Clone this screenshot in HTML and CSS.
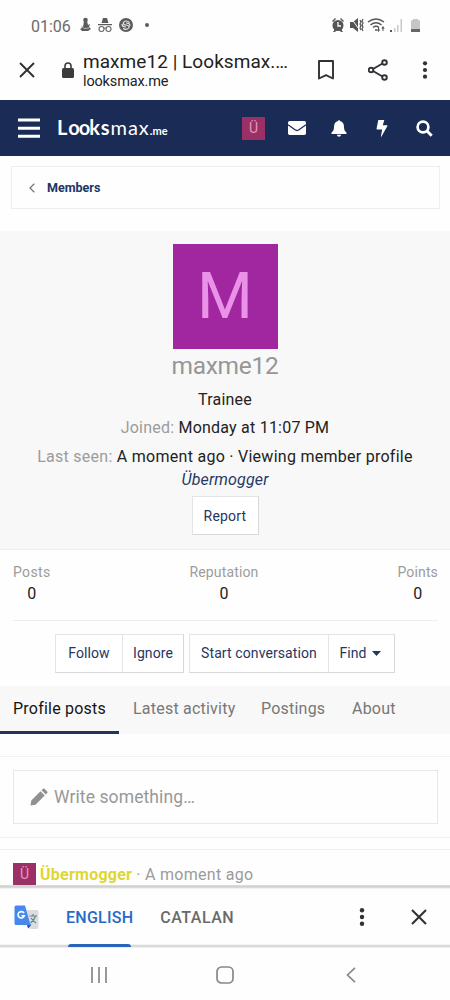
FILE: index.html
```html
<!DOCTYPE html>
<html lang="en">
<head>
<meta charset="utf-8">
<title>maxme12 | Looksmax.me</title>
<link rel="stylesheet" href="styles.css">
</head>
<body>
<div class="status">
  <span class="clock">01:06</span>
  <svg class="status-left" width="76" height="16" viewBox="0 0 76 16">
    <g fill="#5c5c5c"><circle cx="6.500" cy="3" r="2.300"/><path d="M5 4h3l1 4 2-1-1 3 2 2-3 2H3l-2-2 2-1-1-2 2 1z"/><path d="M24 1h4l1.500 5h-7zM19 7h14v1.200H19z"/><circle cx="47" cy="8" r="7"/><circle cx="68" cy="8" r="2"/></g>
    <path d="M2 9q3 4 8 2" stroke="#ddd" fill="none" stroke-width=".7"/>
    <g fill="none" stroke="#666" stroke-width="1.100"><circle cx="22.500" cy="12" r="2.500"/><circle cx="29.500" cy="12" r="2.500"/><path d="M25 11.500q1-1 2 0"/></g>
    <path d="M50.500 5.500q-4-3-6 0-1 2 2.500 2.500t3 2.500q-2 3-6 1M43 7q0 3 4 3M51 9q0-3-4-3" fill="none" stroke="#eee" stroke-width="1.200"/>
  </svg>
  <svg class="status-right" width="92" height="16" viewBox="0 0 92 16">
    <g fill="#555"><circle cx="7" cy="8.500" r="5.500"/><path d="M1 4l3-3 1 1-3 3zM13 4l-3-3-1 1 3 3zM2 15l2-3 2 1-2 2zM12 15l-2-3-2 1 2 2z"/><path d="M19 5h3l5-4v14l-5-4h-3z"/></g>
    <path d="M7 5v4h3" fill="none" stroke="#fff" stroke-width="1.300"/>
    <path d="M20 1l10 14" stroke="#fff" stroke-width="1"/><path d="M29 3l1 2-1 2 1 2-1 2 1 2M32 2l-1 2 1 2-1 2 1 2-1 2 1 2" fill="none" stroke="#555" stroke-width="1.200"/>
    <g fill="none" stroke="#555" stroke-width="1.400"><path d="M37 5q8-6 16 0M39.500 8q5.500-4.500 11 0M42 10.500q3-2.500 6 0"/><path d="M47.500 10v4M52 14v-4" stroke-width="1"/></g>
    <g fill="#555"><circle cx="45" cy="13" r="1"/><path d="M45.800 12.500h3.400l-1.700 2.500zM50.300 11.500h3.400L52 9zM59 13h2v2h-2z"/></g>
    <path d="M63 11h1.500v4H63zM66 8h1.500v7H66zM69.500 2H71v13h-1.500z" fill="#c8c8c8"/>
    <path d="M80 4q0-1 2-1V2h5v1q2 0 2 1v9h-9z" fill="#c6c6c6"/><path d="M80 12h9v3h-9z" fill="#666"/>
  </svg>
</div>
<div class="browser">
  <svg class="close" width="16" height="16" viewBox="0 0 16 16"><path d="M1 1l14 14M15 1L1 15" stroke="#303134" stroke-width="1.900"/></svg>
  <svg class="lock" width="12" height="16" viewBox="0 0 12 16"><path d="M3 7V4a3 3 0 0 1 6 0v3" fill="none" stroke="#3c3c3f" stroke-width="1.600"/><rect y="6" width="12" height="10" rx="1.500" fill="#3c3c3f"/></svg>
  <div class="address"><div class="page-title">maxme12 | Looksmax.…</div><div class="host">looksmax.me</div></div>
  <svg class="bookmark" width="16" height="20" viewBox="0 0 16 20"><path d="M1 1h14v17.500l-7-3.300-7 3.300z" fill="none" stroke="#303134" stroke-width="1.900" stroke-linejoin="round"/></svg>
  <svg class="share" width="20" height="22" viewBox="0 0 20 22"><g fill="none" stroke="#303134" stroke-width="1.900"><circle cx="16.500" cy="3.500" r="2.300"/><circle cx="3" cy="11" r="2.300"/><circle cx="16.500" cy="18.500" r="2.300"/><path d="M5 10l9.500-5.500M5 12l9.500 5.500"/></g></svg>
  <svg class="more" width="6" height="18" viewBox="0 0 6 18"><g fill="#303134"><circle cx="3" cy="2.300" r="2.100"/><circle cx="3" cy="9" r="2.100"/><circle cx="3" cy="15.700" r="2.100"/></g></svg>
</div>
<header class="site">
  <svg class="menu" width="22" height="20" viewBox="0 0 22 20"><path d="M0 2h22M0 10.200h22M0 18.300h22" stroke="#fff" stroke-width="3"/></svg>
  <div class="logo"><b>L<span class="oo">oo</span>ks</b><span class="thin">max</span><small>.me</small></div>
  <span class="mini head-mini">Ü</span>
  <svg class="mail" width="18" height="14" viewBox="0 0 18 14"><rect width="18" height="14" rx="1.700" fill="#fff"/><path d="M0 3.800l7 5q2 1.400 4 0l7-5" fill="none" stroke="#1a2b55" stroke-width="1.300"/></svg>
  <svg class="bell" width="16" height="17" viewBox="0 0 16 17"><path d="M7 1q1-2 2 0 4 1 4 6 0 4 2.500 5.500V14H.5v-1.500Q3 11 3 7q0-5 4-6zM5.800 14.700h4.400q-.4 2-2.200 2t-2.200-2z" fill="#fff"/></svg>
  <svg class="bolt" width="12" height="17" viewBox="0 0 12 17"><path d="M2.300 0h6L6.800 5.300H11q.8 0 .4.800L5.500 16.500q-.7.800-.6-.3L6.200 9.500H1.200q-.8 0-.7-.8z" fill="#fff"/></svg>
  <svg class="search" width="17" height="17" viewBox="0 0 17 17"><g fill="none" stroke="#fff" stroke-width="2.700"><circle cx="7" cy="7" r="5.400"/><path d="M11 11l4.700 4.700" stroke-width="3"/></g></svg>
</header>
<nav class="crumb">
  <svg width="6" height="10" viewBox="0 0 6 10"><path d="M5.300.8L1 5l4.300 4.200" fill="none" stroke="#777" stroke-width="1.300"/></svg>
  <a>Members</a>
</nav>
<section class="profile">
  <div class="avatar">M</div>
  <h1>maxme12</h1>
  <div class="line role">Trainee</div>
  <div class="line joined"><i>Joined:</i> Monday at 11:07 PM</div>
  <div class="line seen"><i>Last seen:</i> A moment ago · Viewing member profile</div>
  <em>Übermogger</em>
  <a class="button report">Report</a>
</section>
<section class="stats">
  <dl><dt>Posts</dt><dd>0</dd></dl>
  <dl><dt>Reputation</dt><dd>0</dd></dl>
  <dl><dt>Points</dt><dd>0</dd></dl>
</section>
<div class="actions">
  <a class="button follow">Follow</a><a class="button ignore">Ignore</a>
  <a class="button start">Start conversation</a><a class="button find">Find <svg width="9" height="5" viewBox="0 0 9 5"><path d="M0 0h9L4.500 5z" fill="#26365f"/></svg></a>
</div>
<nav class="tabs"><a class="active">Profile posts</a><a class="t2">Latest activity</a><a class="t3">Postings</a><a class="t4">About</a></nav>
<section class="composer">
  <div class="field"><svg width="18" height="18" viewBox="0 0 18 18"><path d="M.5 17.500L1.300 12.500 10.500 3.300l4.200 4.200L5.500 16.700zM11.500 2.300l1.500-1.500q.8-.7 1.600 0l2.600 2.600q.7.800 0 1.600l-1.500 1.500z" fill="#919191"/></svg><span>Write something…</span></div>
</section>
<section class="post"><span class="mini">Ü</span><b>Übermogger</b><span class="when">· A moment ago</span></section>
<div class="translate">
  <svg class="gt" width="25" height="25" viewBox="0 0 25 25"><path d="M11 5h12q1.500 0 1.500 1.500V22q0 2-1.500 2h-7z" fill="#dadce0"/><path d="M13 19.500h4.500l-3 4q-1.500-1-1.500-4z" fill="#3056b0"/><path d="M2 .5h9l5.500 19.500H2Q.5 20 .5 18.500V2Q.5.500 2 .5z" fill="#4688ed"/><path d="M10 8.200a3.200 3.200 0 1 0 .3 2.500H7.500" fill="none" stroke="#fff" stroke-width="1.600"/><path d="M15.500 11h7.500M19 9v2M21.500 11q-1 4-5 7M17 13q2 3 5 5" fill="none" stroke="#68858c" stroke-width="1.200"/></svg>
  <span class="lang chosen">ENGLISH</span><span class="lang catalan">CATALAN</span>
  <svg class="tmore" width="6" height="18" viewBox="0 0 6 18"><g fill="#303134"><circle cx="3" cy="2.300" r="2.200"/><circle cx="3" cy="9" r="2.200"/><circle cx="3" cy="15.700" r="2.200"/></g></svg>
  <svg class="tclose" width="16" height="16" viewBox="0 0 16 16"><path d="M1 1l14 14M15 1L1 15" stroke="#303134" stroke-width="2.100"/></svg>
</div>
<div class="system">
  <svg class="recents" width="16" height="16" viewBox="0 0 16 16"><path d="M1 0v16M8 0v16M15 0v16" stroke="#888" stroke-width="1.700"/></svg>
  <svg class="home" width="18" height="18" viewBox="0 0 18 18"><rect x="1" y="1" width="16" height="16" rx="4.500" fill="none" stroke="#888" stroke-width="1.700"/></svg>
  <svg class="back" width="10" height="16" viewBox="0 0 10 16"><path d="M9 .8L1.500 8 9 15.200" fill="none" stroke="#888" stroke-width="1.700"/></svg>
</div>
</body>
</html>
```
FILE: styles.css
```css
* { box-sizing: border-box; }
body { margin: 0; width: 450px; height: 1000px; overflow: hidden; background: #fefefe; font-family: Roboto, sans-serif; color: #222; }
svg { display: block; flex: none; }
.status, .browser, .site, .crumb, .translate, .system, .post { display: flex; align-items: center; white-space: nowrap; }
.status { height: 48px; padding: 4px 27px 0 31px; }
.clock { width: 40px; font-size: 16px; color: #6a6a6a; }
.status-left { margin: 0 0 2px 8px; }
.status-right { margin: 0 0 2px auto; }
.browser { height: 52px; padding: 0 22px 9px 19px; }
.lock { margin: 0 9px 0 27px; }
.address { width: 215px; padding-top: 3px; }
.page-title { font-size: 19px; line-height: 21px; letter-spacing: .05px; }
.host { font-size: 14.5px; line-height: 19px; letter-spacing: -.15px; }
.bookmark { margin-left: 20px; }
.share { margin-left: 34px; }
.more { margin-left: auto; }
.site { height: 56px; background: #1a2b55; padding: 0 17px 0 18px; }
.logo { width: 124px; margin-left: 17px; padding-top: 1px; color: #fff; font: 20px/24px Lato, sans-serif; letter-spacing: .9px; }
.logo b { font-weight: 700; }
.oo { letter-spacing: -1px; }
.thin { font-weight: 400; }
.logo small { font-size: 11px; font-weight: 700; letter-spacing: .2px; }
.mini { width: 23px; height: 23px; flex: none; background: #9a3065; color: #e895bd; font-size: 14px; line-height: 23px; text-align: center; }
.head-mini { margin-left: 61px; }
.mail { margin-left: 23px; }
.bell { margin-left: 25px; }
.bolt { margin-left: 29px; }
.search { margin-left: auto; }
.crumb { height: 43px; margin: 10px 10px 22px 11px; padding-left: 17px; border: 1px solid #eee; }
.crumb a { margin-left: 12px; color: #203464; font-size: 12.5px; font-weight: 700; }
.profile { height: 319px; padding-top: 13px; background: #f8f8f8; border-bottom: 1px solid #eee; display: flex; flex-direction: column; align-items: center; white-space: nowrap; }
.avatar { width: 105px; height: 105px; flex: none; background: #a127a0; color: #e992e7; font-size: 64px; line-height: 106px; text-align: center; }
h1 { margin: 2px 0 0; color: #969696; font-size: 24.5px; font-weight: 400; line-height: 30px; letter-spacing: -.3px; }
.line { font-size: 16px; line-height: 24px; letter-spacing: .27px; }
.line i { color: #9c9c9c; font-style: normal; }
.role { margin-top: 7px; letter-spacing: .2px; }
.joined { margin-top: 4px; letter-spacing: .22px; }
.seen { margin-top: 5px; }
.profile em { margin-top: 0; color: #263966; font-size: 16px; line-height: 22px; letter-spacing: .15px; }
.button { height: 39px; border: 1px solid #e4e4e4; border-right-color: #d8d8d8; border-bottom-color: #d8d8d8; background: #fff; color: #26365f; font-size: 14px; display: flex; align-items: center; justify-content: center; letter-spacing: .1px; padding-bottom: 1px; }
.report { width: 67px; margin-top: 5px; letter-spacing: .2px; padding-bottom: 0; }
.stats { height: 70px; margin: 1px 12px 0 13px; padding-top: 11px; border-bottom: 1px solid #eee; display: flex; justify-content: space-between; text-align: center; }
dl, dd { margin: 0; }
dt { color: #9c9c9c; font-size: 14px; line-height: 21px; letter-spacing: .15px; }
dl:first-child dt { letter-spacing: .35px; }
dd { font-size: 16px; line-height: 22px; }
.actions { display: flex; padding: 13px 0 0 55px; height: 65px; }
.follow { width: 68px; }
.ignore { width: 62px; margin-left: -1px; }
.start { width: 140px; margin-left: 5px; }
.find { width: 67px; margin-left: -1px; gap: 5px; padding-right: 3px; }
.tabs { height: 48px; background: #f8f8f8; display: flex; font-size: 16px; line-height: 45px; letter-spacing: .22px; color: #777; }
.tabs .active { width: 119px; padding-left: 13px; border-bottom: 3px solid #24345f; color: #141414; }
.t2 { width: 128px; margin-left: 14px; }
.t3 { width: 91px; }
.composer { height: 82px; margin-top: 22px; padding: 13px 12px 13px 13px; border: solid #f1f1f1; border-width: 1px 0; }
.field { height: 54px; border: 1px solid #e8e8e8; display: flex; align-items: center; padding-left: 16px; color: #989898; font-size: 17.5px; letter-spacing: .1px; }
.field span { margin-left: 6px; }
.post { height: 38px; margin-top: 11px; padding: 13px 0 0 13px; border-top: 1px solid #f1f1f1; align-items: flex-start; font-size: 16px; line-height: 23px; }
.post b { margin-left: 4px; color: #ded732; letter-spacing: .25px; }
.when { margin-left: 4px; color: #9b9b9b; letter-spacing: .3px; }
.translate { position: relative; height: 63px; margin-top: -2px; padding: 3px 23px 2px 14px; background: linear-gradient(#dedede, #cecece 2px, #e5e5e5 3px, #fefefe 4px, #fefefe 59px, #d0d0d0 61px, #e0e0e0 62px, #fefefe); }
.gt, .lang { margin-top: 1px; }
.lang { font-size: 16px; font-weight: 500; color: #6a6a6a; letter-spacing: .5px; }
.chosen { color: #2869c8; margin-left: 27px; letter-spacing: .25px; }
.chosen::after { content: ""; position: absolute; left: 68px; bottom: 1px; width: 63px; height: 3px; border-radius: 3px 3px 0 0; background: #2864b8; }
.catalan { margin-left: 27px; }
.tmore { margin-left: auto; }
.tclose { margin-left: 46px; }
.system { height: 53px; padding-left: 91px; }
.home { margin-left: 109px; }
.back { margin-left: 112px; }
```
